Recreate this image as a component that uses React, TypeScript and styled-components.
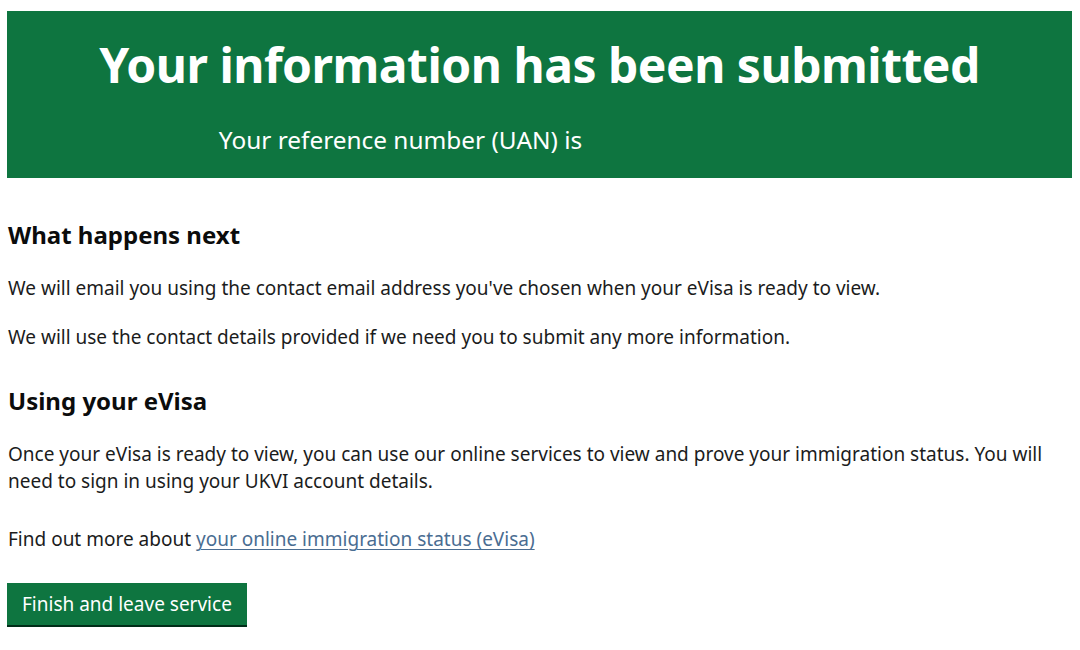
import styled, { createGlobalStyle } from 'styled-components';

const GlobalStyle = createGlobalStyle`
    body {
        margin: 0;
        background: #ffffff;
        font-family: 'Noto Sans', 'Liberation Sans', sans-serif;
        color: #1b1c1c;
    }
`;

const App = () => {
    return (
        <Page>
            <GlobalStyle />
            <Panel>
                <PanelTitle>Your information has been submitted</PanelTitle>
                <PanelBody>
                    Your reference number (UAN) is
                    <Reference />
                </PanelBody>
            </Panel>

            <Section>
                <Heading>What happens next</Heading>
                <Body>
                    We will email you using the contact email address you've
                    chosen when your eVisa is ready to view.
                </Body>
                <Body>
                    We will use the contact details provided if we need you to
                    submit any more information.
                </Body>
            </Section>

            <Section>
                <Heading>Using your eVisa</Heading>
                <Body $gap={31}>
                    Once your eVisa is ready to view, you can use our online
                    services to view and prove your immigration status. You will
                    need to sign in using your UKVI account details.
                </Body>
                <Body>
                    Find out more about{' '}
                    <Link href='#'>your online immigration status (eVisa)</Link>
                </Body>
            </Section>

            <Button type='button'>Finish and leave service</Button>
        </Page>
    );
};

const Page = styled.div`
    width: 1080px;
    height: 650px;
    box-sizing: border-box;
    padding: 11px 8px 0 8px;
    display: flex;
    flex-direction: column;
    align-items: flex-start;
`;

const Panel = styled.div`
    align-self: stretch;
    margin: 0 0 0 -1px;
    height: 167px;
    box-sizing: border-box;
    background: #0e7540;
    color: #ffffff;
    display: flex;
    flex-direction: column;
    align-items: center;
    padding-top: 25px;
`;

const PanelTitle = styled.h1`
    margin: 0;
    font-size: 48px;
    font-weight: 700;
    line-height: 1.2;
    letter-spacing: -0.5px;
`;

const PanelBody = styled.div`
    margin-top: 30px;
    font-size: 24.4px;
    line-height: 1.3;
    display: flex;
    align-items: center;
`;

const Reference = styled.span`
    display: inline-block;
    width: 278px;
`;

const Section = styled.section`
    margin-top: 42px;
    & + & {
        margin-top: 35px;
    }
`;

const Heading = styled.h2`
    margin: 0 0 25px 0;
    font-size: 24px;
    font-weight: 700;
    line-height: 1.25;
    color: #0b0c0c;
`;

const Body = styled.p<{ $gap?: number }>`
    margin: 0 0 ${(p) => p.$gap ?? 22}px 0;
    font-size: 19px;
    line-height: 27px;
    max-width: 1040px;
    &:last-child {
        margin-bottom: 0;
    }
`;

const Link = styled.a`
    color: #4a6d92;
    text-decoration: underline;
    text-underline-offset: 3px;
    text-decoration-thickness: 1px;
`;

const Button = styled.button`
    margin-top: 30px;
    margin-left: -1px;
    padding: 9px 15px 8px 15px;
    border: none;
    background: #0e7540;
    color: #ffffff;
    font-family: 'Noto Sans', 'Liberation Sans', sans-serif;
    font-size: 19px;
    line-height: 25px;
    box-shadow: 0 2px 0 #002d18;
    cursor: pointer;
`;

export default App;
